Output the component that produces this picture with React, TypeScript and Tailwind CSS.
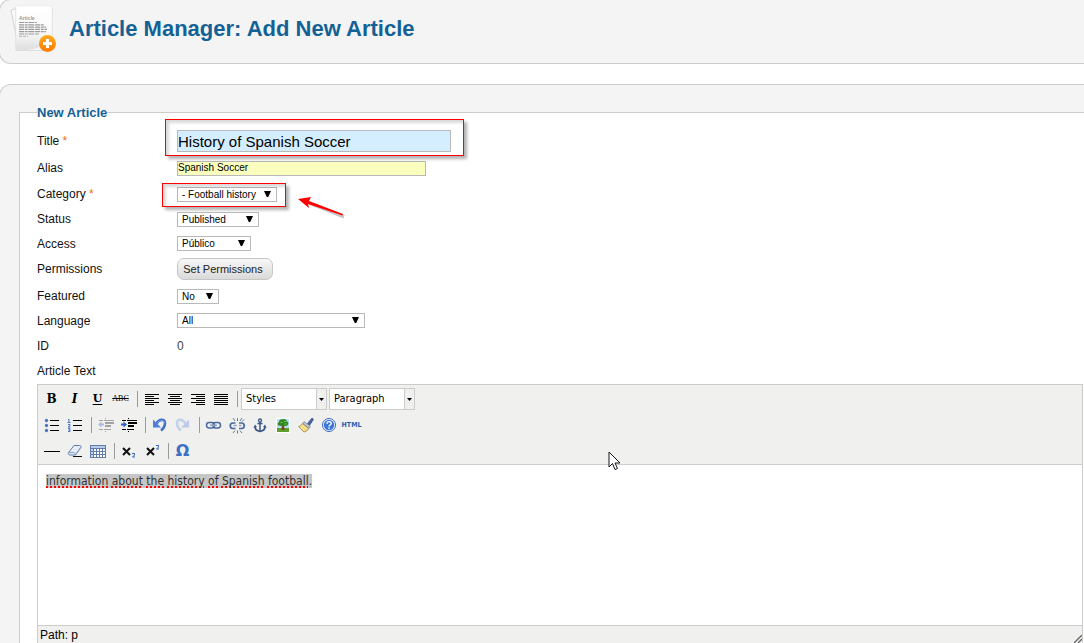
import React, { useState } from 'react';

type IconProps = { children: React.ReactNode };

const Icon = ({ children }: IconProps) => (
  <svg width="23" height="20" viewBox="0 0 23 20" fill="none" aria-hidden="true" className="block">
    {children}
  </svg>
);

const Tool = ({ label, children }: { label: string; children: React.ReactNode }) => (
  <button
    type="button"
    aria-label={label}
    title={label}
    className="flex h-5 w-[23px] shrink-0 items-center justify-center"
  >
    {children}
  </button>
);

const Separator = () => (
  <div className="flex h-5 w-2 shrink-0 items-center justify-center pl-[3px]">
    <div className="h-4 w-px bg-[#9a9a9f]" />
  </div>
);

const Lines = ({ rows }: { rows: [number, number][] }) => (
  <Icon>
    <g shapeRendering="crispEdges" fill="#000">
      {rows.map(([x, w], i) => (
        <rect key={i} x={x} y={5 + i * 2} width={w} height="1" />
      ))}
    </g>
  </Icon>
);

const IndentIcon = ({ dim }: { dim?: boolean }) => (
  <Icon>
    <g shapeRendering="crispEdges" fill={dim ? '#a3a3a3' : '#000'}>
      <rect x="5" y="5" width="4" height="1" />
      <rect x="10" y="5" width="10" height="1" />
      <rect x="11" y="7" width="9" height="2" />
      <rect x="11" y="10" width="6" height="2" />
      <rect x="5" y="14" width="4" height="1" />
      <rect x="10" y="14" width="7" height="1" />
      <rect x="11" y="3" width="1" height="1" />
      <rect x="11" y="16" width="1" height="1" />
    </g>
    {dim ? (
      <path d="M4 9.5 7.5 6.5v2H10v2H7.500v2z" fill="#a9bde0" />
    ) : (
      <path d="M10 9.500 6.500 6.500v2H4v2h2.500v2z" fill="#2a60c8" />
    )}
  </Icon>
);

const UndoIcon = () => (
  <Icon>
    <path d="M8.500 8.500C11 4 17 3.500 17 8c0 3-1.500 5.500-4 7.500" stroke="#3f6fc6" strokeWidth="2.600" />
    <path d="M9 8.200c2.500-3.700 7.500-3.700 7.500 0" stroke="#7ea6ec" />
    <path d="M5 4.500v8h8z" fill="#4f7fd6" />
  </Icon>
);

const RedoIcon = () => (
  <Icon>
    <path d="M14.500 8.500C12 4 6 3.500 6 8c0 3 1.500 5.500 4 7.500" stroke="#c3d1ec" strokeWidth="2.600" />
    <path d="M18 4.500v8h-8z" fill="#bccbe8" />
  </Icon>
);

const LinkIcon = () => (
  <Icon>
    <rect x="4.500" y="7.500" width="8" height="5.500" rx="2.700" stroke="#4b6a9b" strokeWidth="1.500" />
    <rect x="11" y="7.500" width="7.500" height="5.500" rx="2.700" stroke="#4b6a9b" strokeWidth="1.500" />
    <path d="M8 10.300h7" stroke="#8ea5c9" strokeWidth="1.600" />
  </Icon>
);

const UnlinkIcon = () => (
  <Icon>
    <path d="M10.500 8H8a2.500 2.500 0 0 0 0 5.500h2.500M14 8h2.500a2.500 2.500 0 0 1 0 5.500H14" stroke="#4a699a" strokeWidth="1.700" />
    <path d="M8.500 10.500h3M14 10.500h2.500" stroke="#8ea5c9" strokeWidth="1.500" />
    <path d="M12.500 3v3M8 3l2 3M17 3l-2 3M19 4.500l-2 2M12.500 15.500v3M8 18l2-2.500M17 18l-2-2.500" stroke="#61799f" />
  </Icon>
);

const AnchorIcon = () => (
  <Icon>
    <circle cx="12" cy="5.500" r="1.500" stroke="#3b5787" strokeWidth="1.300" />
    <path d="M12 7v9M9.500 8.500h5" stroke="#3b5787" strokeWidth="1.500" />
    <path d="M7 11.500c0 3.500 2.500 4.500 5 4.800 2.500-.3 5-1.300 5-4.800" stroke="#3b5787" strokeWidth="1.700" />
    <path d="m5.500 13 1.500-3.500L9 12zM18.500 13 17 9.500 15 12z" fill="#3b5787" />
  </Icon>
);

const TreeIcon = () => (
  <Icon>
    <rect x="5" y="3" width="14" height="15" fill="#fff" />
    <rect x="6" y="4" width="12" height="9" fill="#b9dcf5" />
    <rect x="6" y="13" width="12" height="4" fill="#5fa02b" />
    <path d="M11 9h2l.5 6h-3z" fill="#7b4a1c" />
    <path d="M8 10.500C6 9.500 6.500 7.500 8 7.200 8 5 10 4 11.500 4.500c2-1 4 0 4.200 1.900 2.300.6 2.100 3.600.3 4.100-1.500 1-3 .3-4-.2-1.300.8-2.800.8-4 .2z" fill="#2c8a20" />
    <path d="M9.500 7.500h2M13 6.500h2M13.500 9h2" stroke="#77c544" />
  </Icon>
);

const BrushIcon = () => (
  <Icon>
    <path d="M13.500 8.500 17.500 3.500c.8-.8 2.300.5 1.700 1.500L15.500 10.500z" fill="#47639b" stroke="#2e4677" strokeWidth=".6" />
    <path d="m10 6.500 6.500 5-1.500 2-6.500-5z" fill="#b9c3d8" stroke="#6b7890" strokeWidth=".6" />
    <path d="M8.500 8.500 14.800 13.500c-1 2-2.800 3-4.800 3.500L4.500 11.500c1.500-.5 3-1.500 4-3z" fill="#f0d678" stroke="#8f7740" strokeWidth=".7" />
    <path d="m6.500 11.500 4 4M8.500 10.500l4 3.500" stroke="#fff2b6" />
  </Icon>
);

const HelpIcon = () => (
  <Icon>
    <circle cx="12" cy="10" r="6.500" fill="#fff" stroke="#3566bd" />
    <circle cx="12" cy="10" r="5.200" fill="#3d78d8" />
    <path d="M10 8.700c0-2.800 4.200-2.600 4.200-.3 0 1.500-2.200 1.600-2.200 3.100M12 12.500V14" stroke="#fff" strokeWidth="1.400" />
  </Icon>
);

const EraserIcon = () => (
  <Icon>
    <path d="M5.500 11.500 11 4.500h5.500c1.500 0 2 1 1.200 2.200L12.500 14H7c-1.500 0-2.200-1.300-1.500-2.500z" fill="#e6edf8" stroke="#5f7aa8" />
    <path d="M5.500 11.500H10c1.500 0 2.500.5 2.500 2.500l5-7.500" stroke="#8ba1c5" />
    <path d="M10 15.500h9" stroke="#111" shapeRendering="crispEdges" />
  </Icon>
);

const TableIcon = () => (
  <Icon>
    <g shapeRendering="crispEdges">
      <rect x="4" y="4" width="16" height="13" fill="#5f7caa" />
      <rect x="5" y="5" width="14" height="2" fill="#b8cbea" />
      {[8, 11, 14].map((y) =>
        [5, 8, 11, 14, 17].map((x) => (
          <rect key={`${x}-${y}`} x={x} y={y} width="2" height="2" fill={x === 5 ? '#c7d7f0' : '#fff'} />
        )),
      )}
    </g>
  </Icon>
);

const ListIcon = ({ numbered }: { numbered?: boolean }) => (
  <Icon>
    <g shapeRendering="crispEdges" fill="#000">
      <rect x="10" y="5" width="9" height="1" />
      <rect x="10" y="10" width="9" height="1" />
      <rect x="10" y="15" width="9" height="1" />
    </g>
    {numbered ? (
      <path d="M5 4.500h1v3M4.500 7.500h3M5 9.500h2v1L5 12h2.500M5 13.500h2v1.500H5.500M7 15v1.500H5" stroke="#3566c0" strokeWidth=".9" />
    ) : (
      <g fill="#3e6fc4" stroke="#24498e" strokeWidth=".5">
        <circle cx="6.500" cy="5.500" r="1.300" />
        <circle cx="6.500" cy="10.500" r="1.300" />
        <circle cx="6.500" cy="15.500" r="1.300" />
      </g>
    )}
  </Icon>
);

const ArticleIcon = () => (
  <svg width="48" height="50" viewBox="0 0 48 50" aria-hidden="true" className="block shrink-0">
    <defs>
      <linearGradient id="paper" x1="0" y1="0" x2="0" y2="1">
        <stop offset="0" stopColor="#fff" />
        <stop offset=".6" stopColor="#fafafa" />
        <stop offset="1" stopColor="#dedede" />
      </linearGradient>
      <linearGradient id="badge" x1="0" y1="0" x2="0" y2="1">
        <stop offset="0" stopColor="#ffad22" />
        <stop offset="1" stopColor="#ff7a00" />
      </linearGradient>
    </defs>
    <path d="m2 6 6-1.500V36z" fill="#fafafa" stroke="#d4d4d4" />
    <rect x="6.500" y="3" width="37" height="44" fill="#dadada" />
    <rect x="7" y="2" width="36" height="44" fill="url(#paper)" stroke="#e4e4e4" strokeWidth=".5" />
    <path d="M18 46c9-1 15-3 19-8l6-1v9z" fill="#f8f8f8" />
    <text x="10" y="16" className="text-[5px] font-bold" fill="#999">Article</text>
    <path d="M10 18.500h18M10 20.800h25M10 23.100h27M10 25.400h28M10 27.700h27M10 30h20" stroke="#9a9a9a" strokeWidth="1.200" strokeDasharray="5 .7 3 .6 6 .8" />
    <path d="M10 32.300h9" stroke="#aaa" strokeDasharray="3 1" />
    <circle cx="38.500" cy="39.500" r="8.500" fill="url(#badge)" />
    <path d="M38.500 35v9M34 39.500h9" stroke="#fff" strokeWidth="3" />
  </svg>
);

type SelectProps = { id: string; value: string; width: string };

const SmallSelect = ({ id, value, width }: SelectProps) => (
  <div className={`relative ${width}`}>
    <select
      id={id}
      defaultValue={value}
      className="block h-[15px] w-full appearance-none border border-[#b9b9b9] bg-white pl-1 text-[10px] leading-[13px] text-black"
    >
      <option>{value}</option>
    </select>
    <svg width="7" height="6" viewBox="0 0 7 6" aria-hidden="true" className="pointer-events-none absolute top-1 right-[6px]">
      <path d="M0 0h7L4.200 6H2.800z" fill="#000" />
    </svg>
  </div>
);

const ToolSelect = ({ label }: { label: string }) => (
  <div className="relative w-[86px]">
    <select
      aria-label={label}
      className="block h-[22px] w-full appearance-none border border-[#ccc] bg-white pl-1 font-['DejaVu_Sans_Condensed','DejaVu_Sans',sans-serif] text-[11px] text-black"
    >
      <option>{label}</option>
    </select>
    <div className="pointer-events-none absolute inset-y-0 right-0 flex w-[11px] items-center justify-center border border-[#ccc] bg-[#f0f0ee]">
      <svg width="5" height="3" viewBox="0 0 5 3" aria-hidden="true">
        <path d="M0 0h5L2.500 3z" fill="#000" />
      </svg>
    </div>
  </div>
);

type RowProps = { label: string; htmlFor?: string; required?: boolean; height: string; children?: React.ReactNode };

const Row = ({ label, htmlFor, required, height, children }: RowProps) => (
  <div className={`flex items-center ${height}`}>
    <label htmlFor={htmlFor} className="w-[140px] shrink-0">
      {label}
      {required && <span className="text-[#e5701a]"> *</span>}
    </label>
    {children}
  </div>
);

const highlight =
  'pointer-events-none absolute border border-[#f00] shadow-[3px_3px_3px_rgba(0,0,0,0.3),inset_3px_3px_3px_rgba(0,0,0,0.15)]';

const words = ['information', 'about', 'the', 'history', 'of', 'Spanish', 'football'];

export default function App() {
  const [title, setTitle] = useState('History of Spanish Soccer');
  const [alias, setAlias] = useState('Spanish Soccer');

  return (
    <div className="flex min-h-screen flex-col overflow-hidden bg-white font-['Liberation_Sans',Arial,sans-serif] text-[12px] leading-4 text-[#111]">
      <header className="-mt-px -ml-px flex h-[65px] items-center rounded-l-[12px] border border-r-0 border-[#ccc] bg-[#f4f4f4] pb-[6px] pl-[9px]">
        <ArticleIcon />
        <h1 className="ml-3 text-[22px] leading-7 font-bold text-[#146295]">Article Manager: Add New Article</h1>
      </header>

      <main className="mt-5 -ml-px flex flex-1 flex-col rounded-tl-[12px] border-t border-l border-[#ccc] bg-[#f4f4f4] pt-[19px] pl-[19px]">
        <form className="flex flex-1 flex-col" onSubmit={(e) => e.preventDefault()}>
          <div role="group" aria-labelledby="legend" className="mt-2 flex flex-1 flex-col border-t border-l border-[#ccc] bg-white pr-px pl-[17px]">
            <h2 id="legend" className="-mt-2 mb-[6px] self-start bg-linear-to-b from-[#f4f4f4] from-50% to-white to-50% text-[13px] leading-4 font-bold text-[#146295]">
              New Article
            </h2>

            <Row label="Title" htmlFor="title" required height="h-7">
              <div className="relative">
                <input
                  id="title"
                  value={title}
                  onChange={(e) => setTitle(e.target.value)}
                  className="block h-[22px] w-[274px] border border-[#b9b9b9] bg-[#d5eeff] text-[15px] text-black"
                />
                <div className={`${highlight} -top-[11px] -right-[13px] -bottom-1 -left-3`} />
              </div>
            </Row>
            <Row label="Alias" htmlFor="alias" height="h-[26px]">
              <input
                id="alias"
                value={alias}
                onChange={(e) => setAlias(e.target.value)}
                className="block h-[15px] w-[249px] border border-[#b9b9b9] bg-[#faffbd] text-[10px] text-black"
              />
            </Row>
            <Row label="Category" htmlFor="category" required height="h-[26px]">
              <div className="relative">
                <SmallSelect id="category" value="- Football history" width="w-[100px]" />
                <div className={`${highlight} -top-1 -right-[9px] -bottom-[5px] -left-[15px]`} />
                <svg width="52" height="24" viewBox="0 0 52 24" aria-hidden="true" className="pointer-events-none absolute top-2 left-[120px]">
                  <path d="m12 8 35 14" stroke="#000" strokeOpacity=".22" strokeWidth="3" />
                  <path d="m1 4 13-2-2 4 34 13-.5 1.500L11 9l1 4z" fill="#f00" />
                </svg>
              </div>
            </Row>
            <Row label="Status" htmlFor="status" height="h-6">
              <SmallSelect id="status" value="Published" width="w-[82px]" />
            </Row>
            <Row label="Access" htmlFor="access" height="h-[25px]">
              <SmallSelect id="access" value="Público" width="w-[74px]" />
            </Row>
            <Row label="Permissions" htmlFor="permissions" height="h-[25px]">
              <button
                id="permissions"
                type="button"
                className="h-[22px] w-24 rounded-[7px] border border-[#c6c6c6] bg-linear-to-b from-[#f8f8f8] to-[#dadada] pr-1 text-[11px] text-[#222]"
              >
                Set Permissions
              </button>
            </Row>
            <Row label="Featured" htmlFor="featured" height="mt-[3px] h-6">
              <SmallSelect id="featured" value="No" width="w-[42px]" />
            </Row>
            <Row label="Language" htmlFor="language" height="h-[25px]">
              <SmallSelect id="language" value="All" width="w-[188px]" />
            </Row>
            <Row label="ID" htmlFor="article-id" height="h-[25px]">
              <output id="article-id" className="text-[#444]">0</output>
            </Row>
            <Row label="Article Text" height="h-[26px]" />

            <div className="relative flex flex-1 flex-col border border-b-0 border-[#ccc]">
              <div role="toolbar" aria-label="Formatting" className="border-b border-[#ccc] bg-[#f0f0ee] pt-px pl-0.5 text-black">
                <div className="flex h-[26px] items-center">
                  <Tool label="Bold"><span className="font-['DejaVu_Serif',serif] text-[12px] font-bold">B</span></Tool>
                  <Tool label="Italic"><span className="font-['DejaVu_Serif',serif] text-[12px] font-bold italic">I</span></Tool>
                  <Tool label="Underline"><span className="font-['DejaVu_Serif',serif] text-[11px] font-bold underline underline-offset-2">U</span></Tool>
                  <Tool label="Strikethrough"><span className="font-['Liberation_Serif',serif] text-[8px] line-through">ABC</span></Tool>
                  <Separator />
                  <Tool label="Align left"><Lines rows={[[5, 14], [5, 9], [5, 14], [5, 9], [5, 14], [5, 9]]} /></Tool>
                  <Tool label="Align center"><Lines rows={[[5, 14], [7, 10], [5, 14], [7, 10], [5, 14], [7, 10]]} /></Tool>
                  <Tool label="Align right"><Lines rows={[[5, 14], [10, 9], [5, 14], [10, 9], [5, 14], [10, 9]]} /></Tool>
                  <Tool label="Justify"><Lines rows={[[5, 14], [5, 14], [5, 14], [5, 14], [5, 14], [5, 14]]} /></Tool>
                  <Separator />
                  <div className="flex gap-0.5 pl-px">
                    <ToolSelect label="Styles" />
                    <ToolSelect label="Paragraph" />
                  </div>
                </div>
                <div className="flex h-[26px] items-center">
                  <Tool label="Bulleted list"><ListIcon /></Tool>
                  <Tool label="Numbered list"><ListIcon numbered /></Tool>
                  <Separator />
                  <Tool label="Outdent"><IndentIcon dim /></Tool>
                  <Tool label="Indent"><IndentIcon /></Tool>
                  <Separator />
                  <Tool label="Undo"><UndoIcon /></Tool>
                  <Tool label="Redo"><RedoIcon /></Tool>
                  <Separator />
                  <Tool label="Insert link"><LinkIcon /></Tool>
                  <Tool label="Remove link"><UnlinkIcon /></Tool>
                  <Tool label="Insert anchor"><AnchorIcon /></Tool>
                  <Tool label="Insert image"><TreeIcon /></Tool>
                  <Tool label="Clean up"><BrushIcon /></Tool>
                  <Tool label="Help"><HelpIcon /></Tool>
                  <Tool label="Edit HTML"><span className="font-['DejaVu_Sans_Condensed','DejaVu_Sans',sans-serif] text-[7px] font-bold text-[#2b5db0]">HTML</span></Tool>
                </div>
                <div className="flex h-[26px] items-center">
                  <Tool label="Horizontal rule"><Icon><rect x="4" y="10" width="16" height="1" fill="#000" /></Icon></Tool>
                  <Tool label="Remove formatting"><EraserIcon /></Tool>
                  <Tool label="Insert table"><TableIcon /></Tool>
                  <Separator />
                  <Tool label="Subscript">
                    <Icon>
                      <path d="m6 7 7 7M13 7l-7 7" stroke="#111" strokeWidth="2" />
                      <path d="M15 12.500h2.500v1.500L15.500 16H18" stroke="#2f63c4" />
                    </Icon>
                  </Tool>
                  <Tool label="Superscript">
                    <Icon>
                      <path d="m7 7 7 7M14 7l-7 7" stroke="#111" strokeWidth="2" />
                      <path d="M16 4.500h2.500V6L16.500 8H19" stroke="#2f63c4" />
                    </Icon>
                  </Tool>
                  <Separator />
                  <Tool label="Special character"><span className="font-['DejaVu_Sans',sans-serif] text-[16px] font-bold text-[#3c6fc6]">Ω</span></Tool>
                </div>
              </div>

              <div
                role="textbox"
                aria-label="Article Text"
                contentEditable
                suppressContentEditableWarning
                spellCheck={false}
                className="min-h-40 flex-1 bg-white px-2 pt-2 font-['DejaVu_Sans_Condensed','DejaVu_Sans',sans-serif] text-[12px] leading-4 text-[#333] outline-none"
              >
                <span className="bg-[#c6c6c6]">
                  {words.map((word, i) => (
                    <React.Fragment key={word}>
                      {i > 0 && ' '}
                      <span className="underline decoration-[#f00] decoration-dotted decoration-2 underline-offset-1 [text-decoration-skip-ink:none]">{word}</span>
                    </React.Fragment>
                  ))}
                  .
                </span>
              </div>

              <div className="flex h-[18px] items-end justify-between border-t border-[#ccc] bg-[#f0f0ee] pl-0.5 text-black">
                <span className="leading-[15px]">Path: p</span>
                <svg width="8" height="8" viewBox="0 0 8 8" aria-hidden="true">
                  <path d="m0 8 8-8M4 8l4-4" stroke="#666" strokeWidth="1.300" />
                </svg>
              </div>

              <svg width="13" height="20" viewBox="0 0 13 20" aria-hidden="true" className="pointer-events-none absolute top-[66px] left-[570px]">
                <path d="M1 1v15l3.500-3.500L7 18.500l2.500-1L7 12h5z" fill="#fff" stroke="#15151f" />
              </svg>
            </div>
          </div>
        </form>
      </main>
    </div>
  );
}
